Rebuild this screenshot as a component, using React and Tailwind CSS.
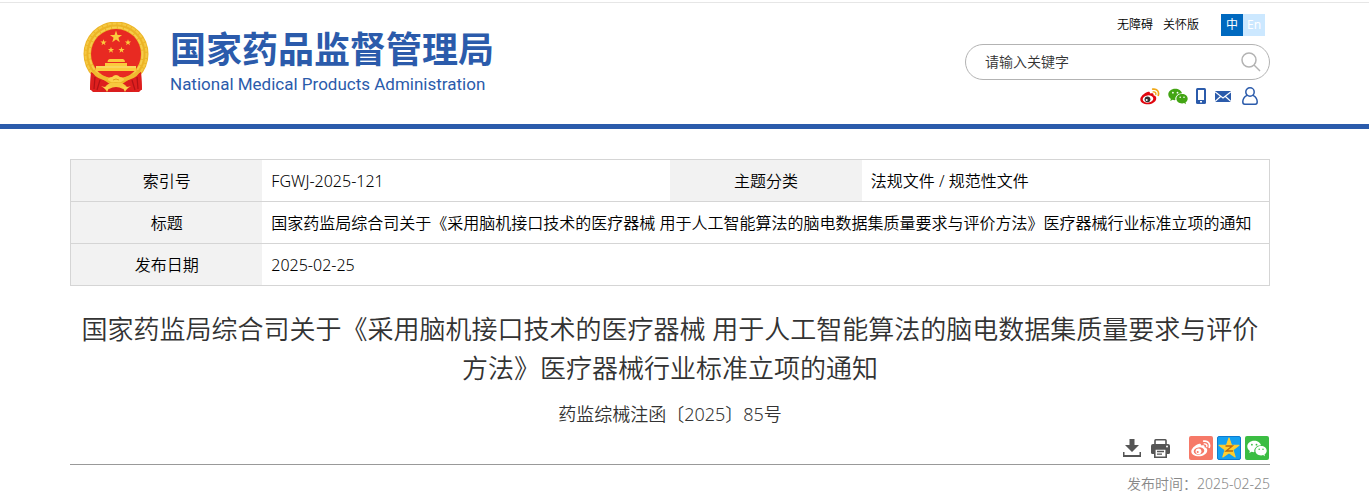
import React, { useState } from 'react';

const BLUE = '#2b5bab';

const STAR = 'M0 -10 L2.35 -3.24 L9.51 -3.09 L3.8 1.24 L5.88 8.09 L0 4 L-5.88 8.09 L-3.8 1.24 L-9.51 -3.09 L-2.35 -3.24 Z';

const Emblem = () => (
  <svg width="66" height="71" viewBox="0 0 66 71" aria-hidden="true">
    <path d="M8 50 L7 68 L11 67 L13 70 H53 L55 67 L59 68 L58 50 Z" fill="#d91d1e" />
    <circle cx="33" cy="32" r="32.500" fill="#ecb426" />
    <circle cx="33" cy="32" r="30.500" fill="none" stroke="#f5c842" strokeWidth="2" strokeDasharray="4 1" />
    <circle cx="33" cy="32" r="26.500" fill="none" stroke="#f6cd4c" strokeWidth="2" strokeDasharray="5 1" />
    <circle cx="33" cy="32" r="25" fill="#e82a22" />
    <g fill="#fbcb3d">
      <path d={STAR} transform="translate(33 15) scale(.64)" />
      <path d={STAR} transform="translate(20.500 20.500) scale(.33)" />
      <path d={STAR} transform="translate(45 20.500) scale(.33)" />
      <path d={STAR} transform="translate(28 28) scale(.33)" />
      <path d={STAR} transform="translate(38.500 28) scale(.33)" />
      <path d="M25 38 L26.500 37 H40 L41.500 38 L42 40 H24.500 Z" />
      <path d="M22 41 H44 V44 H53 V49 H13 V44 H22 Z" />
    </g>
    <path d="M13 45 H53" stroke="#f7df7c" strokeWidth="1" />
    <path d="M8 50 Q13 52 16 55 L27 62 L20 66 L16 70 H10 L7 67 Z" fill="#de1f1e" />
    <path d="M58 50 Q53 52 50 55 L39 62 L46 66 L50 70 H56 L59 67 Z" fill="#de1f1e" />
    <path d="M12 55 L11 67 M17 58 L14 68 M54 55 L55 67 M49 58 L52 68" stroke="#b01216" strokeWidth="1.200" />
    <path d="M9 50 Q14 58 26 59 Q33 62 40 59 Q52 58 57 50 L54 49 Q48 54 42 55 L33 58 L24 55 Q18 54 12 49 Z" fill="#f0ba30" />
    <path d="M25 58 Q25 55 29 55 Q33 51 37 55 Q41 55 41 58 L38 60 H28 Z" fill="#fbd24b" />
    <path d="M22 65 Q27 59 33 61 Q39 59 44 65 L40 67 Q33 63 26 67 Z" fill="#f7c83f" />
    <path d="M18 64 Q23 66 27 64 L24 70 Q23 67 18 64 Z M48 64 Q43 66 39 64 L42 70 Q43 67 48 64 Z" fill="#fbd24b" />
    <path d="M30 58 Q33 56 36 58" fill="none" stroke="#e3991b" strokeWidth="1" />
  </svg>
);

const WeiboIcon = ({ className, body, eye, wave }) => (
  <svg className={className} viewBox="0 0 20 17" aria-hidden="true">
    <path
      d="M7.500 4 C9 3.300 10.300 3.700 9.900 5.600 C12 4.800 14 5 13.500 7.200 C15.500 7.800 16.600 9 16.200 11 C15.600 14.200 11.900 16.300 7.800 16.300 C3.600 16.300 0.300 14.300 0.300 11.400 C0.300 8.500 4 5.300 7.500 4 Z"
      fill={body}
    />
    <ellipse cx="8" cy="11" rx="5.300" ry="3.600" transform="rotate(-8 8 11)" fill={eye} />
    <circle cx="7.500" cy="11.300" r="2.900" fill={body === '#fff' ? '#fff' : '#333'} />
    <circle cx="6.700" cy="12" r="1" fill={eye} />
    <path d="M12.700 1.200 C16.800 .4 19.400 3.500 18.300 7.300" fill="none" stroke={wave} strokeWidth="1.700" strokeLinecap="round" />
    <path d="M13.200 3.900 C15.200 3.500 16.300 5 15.800 6.600" fill="none" stroke={wave} strokeWidth="1.400" strokeLinecap="round" />
  </svg>
);

const WechatIcon = ({ className, fill, eye }) => (
  <svg className={className} viewBox="0 0 20 17" aria-hidden="true">
    <path d="M7.200 .8 C3.300 .8 .3 3.300 .3 6.500 C.3 8.400 1.300 9.900 2.900 10.900 L2.200 13 L4.600 11.800 C5.600 12.100 6.500 12.200 7.400 12.100 C6.700 8.700 9.600 5.300 14 5.300 C13.400 2.700 10.600 .8 7.200 .8 Z" fill={fill} />
    <path d="M19.700 10.700 C19.700 8.100 17.200 6 14.100 6 C10.900 6 8.400 8.100 8.400 10.700 C8.400 13.400 10.900 15.400 14.100 15.400 C14.800 15.400 15.500 15.300 16.100 15.100 L18 16.200 L17.500 14.400 C18.900 13.500 19.700 12.200 19.700 10.700 Z" fill={fill} />
    <circle cx="4.900" cy="4.700" r=".9" fill={eye} />
    <circle cx="9.500" cy="4.700" r=".9" fill={eye} />
    <circle cx="12.200" cy="9.300" r=".8" fill={eye} />
    <circle cx="16" cy="9.300" r=".8" fill={eye} />
  </svg>
);

const PhoneIcon = () => (
  <svg width="10" height="16" viewBox="0 0 10 16" aria-hidden="true">
    <rect width="10" height="16" rx="1.500" fill={BLUE} />
    <rect x="2" y="2" width="6" height="10" fill="#fff" />
    <rect x="4" y="13" width="2" height="1.500" fill="#fff" />
  </svg>
);

const MailIcon = () => (
  <svg width="16" height="11" viewBox="0 0 16 11" aria-hidden="true">
    <rect width="16" height="11" fill={BLUE} />
    <path d="M0 .8 L8 7 L16 .8 M0 10.500 L5.800 5.300 M16 10.500 L10.200 5.300" fill="none" stroke="#fff" strokeWidth="1.200" />
  </svg>
);

const UserIcon = () => (
  <svg width="16" height="18" viewBox="0 0 16 18" fill="none" stroke={BLUE} strokeWidth="1.500" aria-hidden="true">
    <circle cx="8" cy="5" r="4.200" />
    <path d="M5 8.300 C2.200 9.800 .8 12 .8 14.700 C.8 16.400 1.400 17.200 2.700 17.200 H13.300 C14.600 17.200 15.200 16.400 15.200 14.700 C15.200 12 13.800 9.800 11 8.300" />
  </svg>
);

const SearchIcon = () => (
  <svg width="20" height="20" viewBox="0 0 20 20" fill="none" stroke="#b3b3b3" strokeWidth="1.500" aria-hidden="true">
    <circle cx="8" cy="8" r="7" />
    <path d="M13 13 L19 19" />
  </svg>
);

const DownloadIcon = () => (
  <svg width="18" height="18" viewBox="0 0 18 18" fill="#555" aria-hidden="true">
    <path d="M6.500 0 H11.500 V6 H16 L9 13 L2 6 H6.500 Z" />
    <path d="M0 13 H1.500 V16 H16.500 V13 H18 V18 H0 Z" />
  </svg>
);

const PrinterIcon = () => (
  <svg width="19" height="19" viewBox="0 0 19 19" aria-hidden="true">
    <path d="M4 5 V1.500 Q4 .8 4.700 .8 H14.300 Q15 .8 15 1.500 V5" fill="#fff" stroke="#555" strokeWidth="1.600" />
    <path d="M2 5 H17 Q19 5 19 7 V13.500 Q19 15 17.500 15 H1.500 Q0 15 0 13.500 V7 Q0 5 2 5 Z" fill="#555" />
    <path d="M3.800 10 H15.200 V18.200 H3.800 Z" fill="#fff" stroke="#555" strokeWidth="1.600" />
    <path d="M6 12.500 H13 M6 15.200 H11" stroke="#555" strokeWidth="1.300" />
    <circle cx="16" cy="7.500" r="1" fill="#fff" />
  </svg>
);

const QzoneIcon = () => (
  <svg width="22" height="22" viewBox="-11 -11 22 22" aria-hidden="true">
    <path d={STAR} transform="translate(0 .5) scale(1.050)" fill="#ffce2e" stroke="#ffce2e" strokeWidth="1" strokeLinejoin="round" />
    <path d="M-3.500 -2 H3.300 L-2.800 3 H4" fill="none" stroke="#b8690f" strokeWidth="1.400" />
  </svg>
);

const Header = () => {
  const [keyword, setKeyword] = useState('');

  return (
    <header className="mt-0.5 border-t border-b-5 border-t-[#e6e6e6] border-b-[#2b5bab] pr-[29px]">
      <div className="mx-auto flex h-[121px] max-w-[1200px] justify-between">
        <a href="#home" className="flex items-start gap-[21px] pt-[19px] pl-[13px] text-[#2b5bab]">
          <Emblem />
          <span className="flex flex-col pt-[5px]">
            <span className="text-[36px] leading-[46px] font-bold whitespace-nowrap">国家药品监督管理局</span>
            <span className="font-[Roboto,sans-serif] text-[17px] leading-[22px] font-normal whitespace-nowrap">
              National Medical Products Administration
            </span>
          </span>
        </a>

        <div className="w-[305px] pt-[11px]">
          {/* Accessibility and language */}
          <div className="flex items-center justify-end pr-[5px] text-xs text-black">
            <a href="#accessible" className="mr-2.5">无障碍</a>
            <a href="#care" className="mr-[22px]">关怀版</a>
            <button type="button" className="h-[22px] w-[22px] bg-[#0069bf] font-normal text-white">中</button>
            <button type="button" className="h-[22px] w-[22px] bg-[#cce8ff] font-normal text-white">En</button>
          </div>

          <form
            onSubmit={(e) => e.preventDefault()}
            className="mt-2 flex h-9 items-center rounded-full border border-[#b3b3b3] pr-2 pl-[19px]"
          >
            <input
              type="text"
              aria-label="请输入关键字"
              placeholder="请输入关键字"
              value={keyword}
              onChange={(e) => setKeyword(e.target.value)}
              className="min-w-0 flex-1 text-sm text-[#333] outline-none placeholder:text-[#333]"
            />
            <button type="submit" aria-label="搜索">
              <SearchIcon />
            </button>
          </form>

          <div className="mt-[7px] flex h-[18px] items-center justify-end pr-3">
            <a href="#weibo" aria-label="微博" className="mr-2">
              <WeiboIcon className="h-[17px] w-5" body="#e0070f" eye="#fff" wave="#f0a818" />
            </a>
            <a href="#wechat" aria-label="微信" className="mr-2">
              <WechatIcon className="h-[17px] w-5" fill="#43a514" eye="#fff" />
            </a>
            <a href="#mobile" aria-label="手机" className="mr-[9px]"><PhoneIcon /></a>
            <a href="#mail" aria-label="邮箱" className="mr-[11px]"><MailIcon /></a>
            <a href="#user" aria-label="用户"><UserIcon /></a>
          </div>
        </div>
      </div>
    </header>
  );
};

const InfoTable = () => (
  <table className="w-full table-fixed border-collapse border border-[#d5d5d5] text-base leading-[25px] text-black">
    <colgroup>
      <col className="w-[16%]" />
      <col className="w-[34%]" />
      <col className="w-[16%]" />
      <col className="w-[34%]" />
    </colgroup>
    <tbody>
      <tr className="border-b border-[#d5d5d5]">
        <th scope="row" className="bg-[#f2f2f2] pt-[9px] pb-[7px] font-[350]">索引号</th>
        <td className="px-[9px] pt-[9px] pb-[7px]">FGWJ-2025-121</td>
        <th scope="row" className="bg-[#f2f2f2] pt-[9px] pb-[7px] font-[350]">主题分类</th>
        <td className="px-[9px] pt-[9px] pb-[7px]">法规文件 / 规范性文件</td>
      </tr>
      <tr className="border-b border-[#d5d5d5]">
        <th scope="row" className="bg-[#f2f2f2] pt-[9px] pb-[7px] font-[350]">标题</th>
        <td colSpan={3} className="px-[9px] pt-[9px] pb-[7px]">
          国家药监局综合司关于《采用脑机接口技术的医疗器械 用于人工智能算法的脑电数据集质量要求与评价方法》医疗器械行业标准立项的通知
        </td>
      </tr>
      <tr>
        <th scope="row" className="bg-[#f2f2f2] pt-[9px] pb-[7px] font-[350]">发布日期</th>
        <td colSpan={3} className="px-[9px] pt-[9px] pb-[7px]">2025-02-25</td>
      </tr>
    </tbody>
  </table>
);

const App = () => (
  <div className="bg-white font-['Noto_Sans','Noto_Sans_CJK_SC',sans-serif] font-[350] text-[#333]">
    <Header />
    <main className="pt-[30px] pr-[29px]">
      <div className="mx-auto max-w-[1200px]">
        <InfoTable />

        <h1 className="mt-6 text-center text-[26px] leading-[39px] font-[350]">
          国家药监局综合司关于《采用脑机接口技术的医疗器械 用于人工智能算法的脑电数据集质量要求与评价方法》医疗器械行业标准立项的通知
        </h1>
        <p className="mt-3 text-center text-lg">药监综械注函〔2025〕85号</p>

        {/* Tools and sharing */}
        <div className="mt-2 flex items-center justify-end border-b border-[#999] pr-px pb-1">
          <button type="button" aria-label="下载" className="mr-2.5"><DownloadIcon /></button>
          <button type="button" aria-label="打印" className="mr-[19px]"><PrinterIcon /></button>
          <div className="flex gap-1">
            <a href="#share-weibo" aria-label="分享到微博" className="flex h-6 w-6 items-center justify-center rounded-xs bg-[#f67968]">
              <WeiboIcon className="h-[17px] w-5" body="#fff" eye="#f67968" wave="#fff" />
            </a>
            <a href="#share-qzone" aria-label="分享到QQ空间" className="flex h-6 w-6 items-center justify-center rounded-xs border border-[#0c7bd0] bg-[#14a0f0]">
              <QzoneIcon />
            </a>
            <a href="#share-wechat" aria-label="分享到微信" className="flex h-6 w-6 items-center justify-center rounded-xs bg-[#3bbd43]">
              <WechatIcon className="h-[17px] w-5" fill="#fff" eye="#3bbd43" />
            </a>
          </div>
        </div>

        <p className="mt-[9px] text-right text-sm text-[#888]">发布时间：2025-02-25</p>
      </div>
    </main>
  </div>
);

export default App;
